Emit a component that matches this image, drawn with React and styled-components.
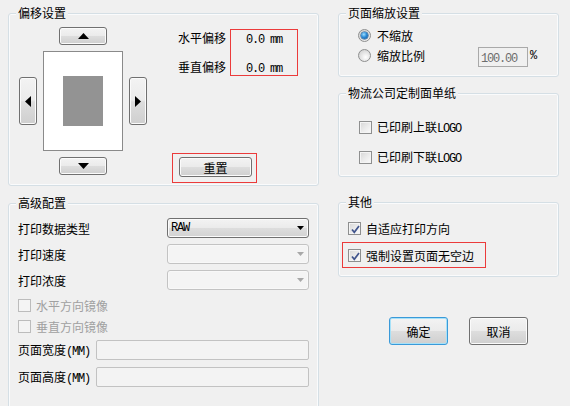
import React from 'react';
import styled, { createGlobalStyle } from 'styled-components';

const GlobalStyle = createGlobalStyle`
  html, body { margin: 0; padding: 0; background: #f0f0f0; }
  body {
    font-family: "Noto Sans CJK SC", "Noto Sans", sans-serif;
    font-size: 12px;
    color: #000;
  }
  * { box-sizing: border-box; }
`;

const Window = styled.div`
  width: 570px;
  height: 406px;
  overflow: hidden;
  background: #f0f0f0;
  display: grid;
  grid-template-columns: 311px 221px;
  column-gap: 19px;
  align-items: start;
  padding: 13px 0 0 8px;
`;

const Column = styled.div`
  display: flex;
  flex-direction: column;
`;

const Group = styled.section`
  position: relative;
  height: ${p => p.$h}px;
  margin-top: ${p => p.$mt || 0}px;
  border: 1px solid #d5dfe5;
  border-radius: 3px;
  box-shadow: inset 0 0 0 1px #fafbfc;
  padding: ${p => p.$pad || '0'};
`;

const Caption = styled.span`
  position: absolute;
  left: 7px;
  top: -8px;
  padding: 0 2px;
  line-height: 14px;
  background: #f0f0f0;
  white-space: nowrap;
`;

const Latin = styled.span`
  font-family: "Liberation Mono", monospace;
  font-size: 12px;
  letter-spacing: -1.2px;
`;

const Text = styled.span`
  white-space: nowrap;
`;

/* ---------- buttons ---------- */
const WinButton = styled.button`
  display: flex;
  align-items: center;
  justify-content: center;
  width: ${p => p.$w}px;
  height: ${p => p.$h}px;
  padding: 0;
  margin: 0;
  font: inherit;
  color: #000;
  grid-area: ${p => p.$area || 'auto'};
  border: 1px solid ${p => (p.$default ? '#3a9ad9' : '#707070')};
  border-radius: 3px;
  background: linear-gradient(to bottom, #f3f3f3 0%, #ebebeb 48%, #dddddd 52%, #cfcfcf 100%);
  box-shadow: inset 0 0 0 1px ${p => (p.$default ? '#a7e1f8' : '#fbfbfb')};
  svg { display: block; }
`;

const Triangle = ({ dir, w, h, color = '#000' }) => {
  const pts = {
    up: `0,${h} ${w / 2},0 ${w},${h}`,
    down: `0,0 ${w},0 ${w / 2},${h}`,
    left: `${w},0 0,${h / 2} ${w},${h}`,
    right: `0,0 ${w},${h / 2} 0,${h}`,
  }[dir];
  return (
    <svg width={w} height={h} viewBox={`0 0 ${w} ${h}`}>
      <polygon points={pts} fill={color} />
    </svg>
  );
};

/* ---------- offset group ---------- */
const OffsetContent = styled.div`
  display: flex;
  gap: 25px;
`;

const Pad = styled.div`
  display: grid;
  grid-template-columns: 18px 80px 18px;
  grid-template-rows: 18px 100px 18px;
  grid-template-areas:
    ". up ."
    "left page right"
    ". down .";
  gap: 6px;
  justify-items: center;
  align-items: center;
`;

const PageBox = styled.div`
  grid-area: page;
  width: 80px;
  height: 100px;
  background: #fff;
  border: 1px solid #8a8a8a;
  display: flex;
  align-items: center;
  justify-content: center;
`;

const PrintArea = styled.div`
  width: 40px;
  height: 50px;
  background: #939393;
`;

const OffsetSide = styled.div`
  display: flex;
  flex-direction: column;
  padding-top: 2px;
`;

const OffsetBlock = styled.div`
  display: flex;
  gap: 4px;
  margin-left: 6px;
`;

const OffsetLabels = styled.div`
  display: flex;
  flex-direction: column;
  gap: 13px;
  margin-top: 1px;
`;

const Line = styled.div`
  height: 16px;
  line-height: 16px;
  white-space: nowrap;
`;

const RedBox = styled.div`
  border: 1px solid #eb3b3b;
  width: ${p => p.$w}px;
  height: ${p => p.$h}px;
`;

const ValueBox = styled(RedBox)`
  display: flex;
  flex-direction: column;
  gap: 13px;
  text-align: center;
`;

const ResetBox = styled(RedBox)`
  margin-top: 77px;
  padding: 3px 0 0 6px;
`;

/* ---------- check & radio ---------- */
const Row = styled.div`
  display: flex;
  align-items: center;
  height: ${p => p.$h || 16}px;
  gap: ${p => p.$gap ?? 5}px;
  padding-left: ${p => p.$pl || 0}px;
  color: ${p => (p.$disabled ? '#a0a0a0' : '#000')};
  white-space: nowrap;
`;

const Box = styled.span`
  flex: none;
  position: relative;
  width: 13px;
  height: 13px;
  border: 1px solid ${p => (p.$disabled ? '#bcbcbc' : '#8e8f8f')};
  background: ${p =>
    p.$disabled
      ? '#f4f4f4'
      : 'linear-gradient(135deg, #d6d6d6 0%, #ececec 55%, #fbfbfb 100%)'};
  box-shadow: inset 0 0 0 1px #f4f4f4;
  svg { position: absolute; left: 1px; top: 1px; display: block; }
`;

const CheckBox = ({ checked, disabled }) => (
  <Box $disabled={disabled}>
    {checked && (
      <svg width="11" height="11" viewBox="0 0 11 11">
        <path d="M2 5.5 L4.3 8.3 L9 2" fill="none" stroke="#40548c" strokeWidth="1.7" />
      </svg>
    )}
  </Box>
);

const Radio = styled.span`
  flex: none;
  position: relative;
  width: 13px;
  height: 13px;
  border-radius: 50%;
  border: 1px solid #8e8f8f;
  background: radial-gradient(circle at 60% 65%, #ffffff 0%, #e6e6e6 45%, #c9c9c9 100%);
  &::after {
    content: '';
    display: ${p => (p.$checked ? 'block' : 'none')};
    position: absolute;
    left: 2px;
    top: 2px;
    width: 7px;
    height: 7px;
    border-radius: 50%;
    background: radial-gradient(circle at 40% 35%, #9fe0ff 0%, #2c8ad6 45%, #0f4f8e 100%);
    box-shadow: 0 0 0 0.5px #1c4a78;
  }
`;

/* ---------- scale group ---------- */
const ScaleInput = styled.div`
  align-self: flex-start;
  margin: 2px 0 0 47px;
  width: 50px;
  height: 20px;
  border: 1px solid #a9a9a9;
  background: #f0f0f0;
  color: #6d6d6d;
  line-height: 18px;
  padding-left: 2px;
`;

const Percent = styled(Latin)`
  align-self: flex-start;
  margin-top: 4px;
  margin-left: -4px;
`;

const Stack = styled.div`
  display: flex;
  flex-direction: column;
  gap: ${p => p.$gap || 0}px;
  margin-top: ${p => p.$mt || 0}px;
`;

/* ---------- advanced group ---------- */
const FieldRow = styled.div`
  display: flex;
  align-items: center;
  height: 20px;
`;

const FieldLabel = styled.span`
  flex: none;
  width: ${p => p.$w}px;
  white-space: nowrap;
`;

const Combo = styled.div`
  flex: 1;
  height: 20px;
  display: flex;
  align-items: center;
  justify-content: space-between;
  padding: 0 4px 0 3px;
  border: 1px solid ${p => (p.$disabled ? '#c3c3c3' : '#707070')};
  border-radius: 3px;
  background: ${p =>
    p.$disabled
      ? '#f4f4f4'
      : 'linear-gradient(to bottom, #f3f3f3 0%, #ebebeb 48%, #dddddd 52%, #d2d2d2 100%)'};
  box-shadow: inset 0 0 0 1px ${p => (p.$disabled ? '#f8f8f8' : '#fbfbfb')};
  svg { display: block; margin-left: auto; }
`;

const TextInput = styled.div`
  flex: 1;
  height: 20px;
  border: 1px solid #c2c2c2;
  border-radius: 2px;
  background: #f3f3f3;
`;

/* ---------- other group ---------- */
const ForceBox = styled(RedBox)`
  margin: 6px 0 0 3px;
  padding: 4px 0 0 5px;
`;

const ButtonRow = styled.div`
  display: flex;
  gap: 21px;
  margin-top: 40px;
  padding-left: 51px;
`;

export default function App() {
  return (
    <>
      <GlobalStyle />
      <Window>
        <Column>
          <Group $h={173} $pad="13px 0 0 10px">
            <Caption>偏移设置</Caption>
            <OffsetContent>
              <Pad>
                <WinButton $area="up" $w={48} $h={18}><Triangle dir="up" w={11} h={6} /></WinButton>
                <WinButton $area="left" $w={18} $h={48}><Triangle dir="left" w={6} h={11} /></WinButton>
                <PageBox><PrintArea /></PageBox>
                <WinButton $area="right" $w={18} $h={48}><Triangle dir="right" w={6} h={11} /></WinButton>
                <WinButton $area="down" $w={48} $h={18}><Triangle dir="down" w={11} h={6} /></WinButton>
              </Pad>
              <OffsetSide>
                <OffsetBlock>
                  <OffsetLabels>
                    <Line>水平偏移</Line>
                    <Line>垂直偏移</Line>
                  </OffsetLabels>
                  <ValueBox $w={68} $h={47}>
                    <Line><Latin>0.0 mm</Latin></Line>
                    <Line><Latin>0.0 mm</Latin></Line>
                  </ValueBox>
                </OffsetBlock>
                <ResetBox $w={85} $h={30}>
                  <WinButton $w={73} $h={20}>重置</WinButton>
                </ResetBox>
              </OffsetSide>
            </OffsetContent>
          </Group>

          <Group $h={215} $mt={17} $pad="14px 9px 0 9px">
            <Caption>高级配置</Caption>
            <Stack $gap={6}>
              <FieldRow>
                <FieldLabel $w={149}>打印数据类型</FieldLabel>
                <Combo>
                  <Latin>RAW</Latin>
                  <Triangle dir="down" w={7} h={4} />
                </Combo>
              </FieldRow>
              <FieldRow>
                <FieldLabel $w={149}>打印速度</FieldLabel>
                <Combo $disabled><Triangle dir="down" w={7} h={4} color="#a8a8a8" /></Combo>
              </FieldRow>
              <FieldRow>
                <FieldLabel $w={149}>打印浓度</FieldLabel>
                <Combo $disabled><Triangle dir="down" w={7} h={4} color="#a8a8a8" /></Combo>
              </FieldRow>
            </Stack>
            <Stack $gap={5} $mt={7}>
              <Row $disabled><CheckBox disabled /><Text>水平方向镜像</Text></Row>
              <Row $disabled><CheckBox disabled /><Text>垂直方向镜像</Text></Row>
            </Stack>
            <Stack $gap={7} $mt={6}>
              <FieldRow>
                <FieldLabel $w={78}>页面宽度<Latin>(MM)</Latin></FieldLabel>
                <TextInput />
              </FieldRow>
              <FieldRow>
                <FieldLabel $w={78}>页面高度<Latin>(MM)</Latin></FieldLabel>
                <TextInput />
              </FieldRow>
            </Stack>
          </Group>
        </Column>

        <Column>
          <Group $h={64} $pad="11px 0 0 19px">
            <Caption>页面缩放设置</Caption>
            <Row $h={20} $gap={6}><Radio $checked /><Text>不缩放</Text></Row>
            <Row $h={20} $gap={6}>
              <Radio /><Text>缩放比例</Text>
              <ScaleInput><Latin>100.00</Latin></ScaleInput>
              <Percent>%</Percent>
            </Row>
          </Group>

          <Group $h={84} $mt={16} $pad="25px 0 0 20px">
            <Caption>物流公司定制面单纸</Caption>
            <Stack $gap={14}>
              <Row><CheckBox /><Text>已印刷上联<Latin>LOGO</Latin></Text></Row>
              <Row><CheckBox /><Text>已印刷下联<Latin>LOGO</Latin></Text></Row>
            </Stack>
          </Group>

          <Group $h={75} $mt={25} $pad="17px 0 0 0">
            <Caption>其他</Caption>
            <Row $pl={9}><CheckBox checked /><Text>自适应打印方向</Text></Row>
            <ForceBox $w={144} $h={26}>
              <Row><CheckBox checked /><Text>强制设置页面无空边</Text></Row>
            </ForceBox>
          </Group>

          <ButtonRow>
            <WinButton $w={59} $h={28} $default>确定</WinButton>
            <WinButton $w={59} $h={28}>取消</WinButton>
          </ButtonRow>
        </Column>
      </Window>
    </>
  );
}
